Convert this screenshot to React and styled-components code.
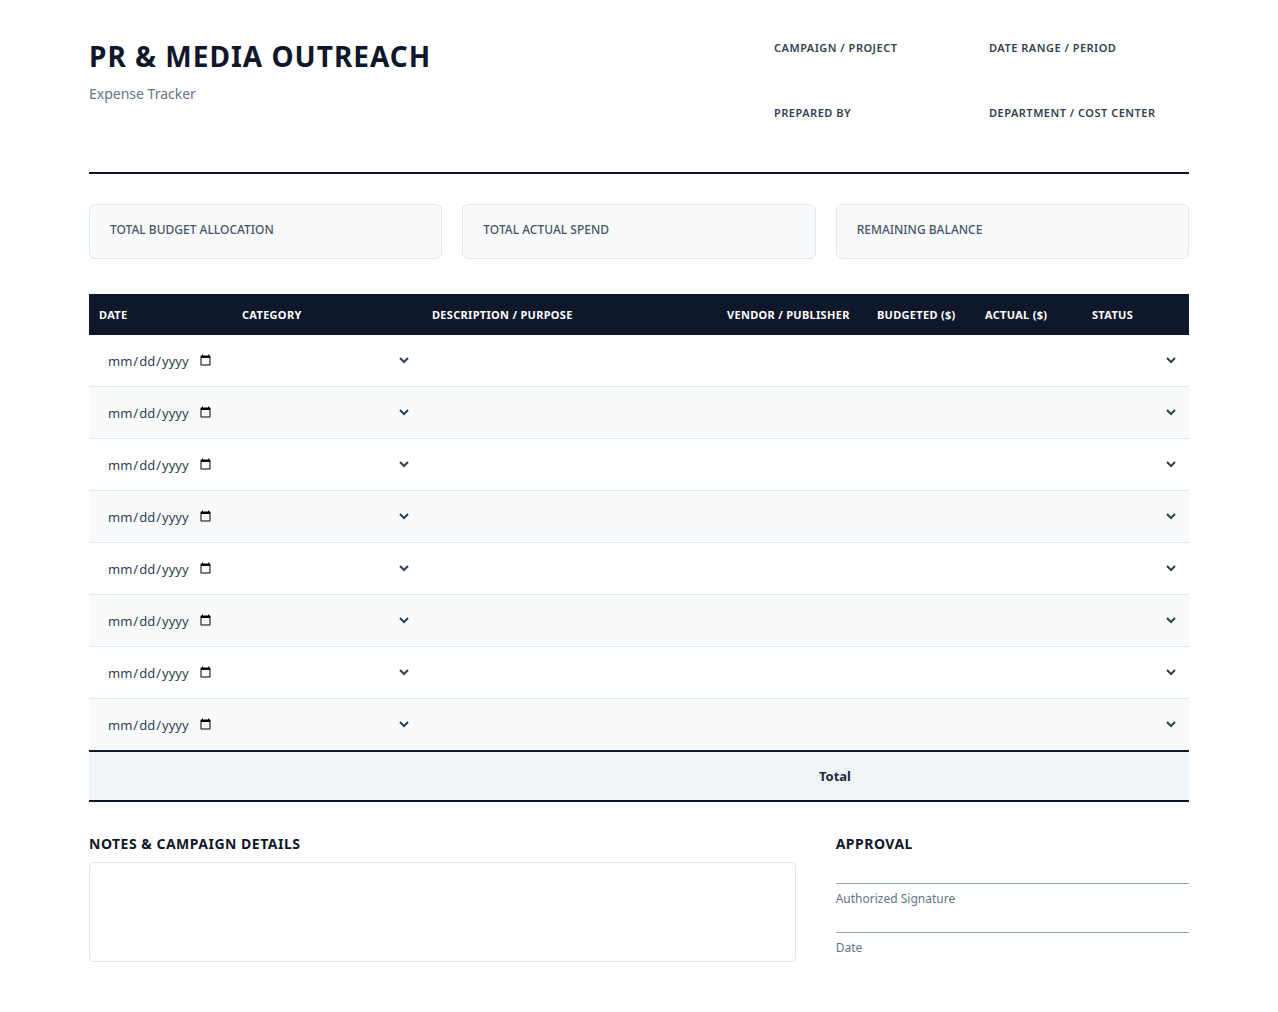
import React from "react";
import styled, { createGlobalStyle } from "styled-components";

const GlobalStyle = createGlobalStyle`
  body {
    margin: 0;
    background: #ffffff;
    font-family: "Noto Sans", "Open Sans", sans-serif;
    color: #0f172a;
  }
  * { box-sizing: border-box; }
`;

const Page = styled.div`
  width: 1100px;
  margin: 0 auto;
  padding: 40px 0;
`;

const Header = styled.header`
  display: flex;
  justify-content: space-between;
  align-items: flex-start;
  padding-bottom: 12px;
  border-bottom: 2px solid #0f172a;
`;

const Title = styled.h1`
  margin: 0;
  font-size: 28px;
  line-height: 1.2;
  font-weight: 700;
  letter-spacing: 1px;
  color: #0f172a;
`;

const Subtitle = styled.div`
  margin-top: 10px;
  font-size: 14px;
  line-height: 20px;
  color: #64748b;
`;

const MetaGrid = styled.div`
  display: grid;
  grid-template-columns: 200px 200px;
  column-gap: 15px;
  row-gap: 10px;
`;

const MetaField = styled.label`
  display: flex;
  flex-direction: column;
`;

const MetaLabel = styled.span`
  font-size: 11px;
  line-height: 16px;
  font-weight: 600;
  letter-spacing: 0.5px;
  color: #334155;
  text-transform: uppercase;
`;

const MetaInput = styled.input`
  height: 36px;
  margin-top: 3px;
  border: none;
  border-bottom: 1px solid transparent;
  background: transparent;
  font-family: inherit;
  font-size: 13px;
  outline: none;
`;

const Cards = styled.div`
  display: grid;
  grid-template-columns: repeat(3, 1fr);
  gap: 20px;
  margin-top: 30px;
`;

const Card = styled.div`
  border: 1px solid #e2e8f0;
  border-radius: 6px;
  background: #f8fafc;
  padding: 15px 20px 19px;
`;

const CardLabel = styled.div`
  font-size: 12px;
  line-height: 19px;
  font-weight: 500;
  color: #475569;
  text-transform: uppercase;
`;

const Table = styled.table`
  width: 100%;
  margin-top: 35px;
  border-collapse: collapse;
  table-layout: fixed;
`;

const Th = styled.th`
  background: #0f172a;
  color: #ffffff;
  text-align: left;
  font-size: 11px;
  line-height: 17px;
  font-weight: 700;
  letter-spacing: 0.3px;
  padding: 12px 10px;
  text-transform: uppercase;
  white-space: nowrap;
`;

const Row = styled.tr`
  background: ${(p) => (p.$alt ? "#f8fafc" : "#ffffff")};
  border-bottom: 1px solid #e2e8f0;
`;

const Td = styled.td`
  padding: 8px 10px;
  height: 51px;
`;

const CellInput = styled.input`
  width: 100%;
  height: 35px;
  padding: 6px 8px;
  border: none;
  background: transparent;
  font-family: inherit;
  font-size: 13px;
  color: #334155;
  outline: none;
`;

const CellSelect = styled.select`
  width: 100%;
  height: 35px;
  padding: 6px 4px;
  border: none;
  background: transparent;
  font-family: inherit;
  font-size: 13px;
  color: #334155;
  outline: none;
`;

const TotalRow = styled.tr`
  background: #f1f5f9;
  border-top: 2px solid #0f172a;
  border-bottom: 2px solid #0f172a;
`;

const TotalCell = styled.td`
  padding: 15px 16px;
  line-height: 18px;
  font-size: 13px;
  font-weight: 700;
  color: #1e293b;
  text-align: ${(p) => p.$align || "left"};
`;

const Bottom = styled.div`
  display: grid;
  grid-template-columns: 2fr 1fr;
  gap: 40px;
  margin-top: 32px;
`;

const SectionTitle = styled.h3`
  margin: 0 0 9px;
  font-size: 14px;
  line-height: 19px;
  font-weight: 700;
  letter-spacing: 0.5px;
  color: #0f172a;
`;

const Notes = styled.textarea`
  display: block;
  width: 100%;
  height: 100px;
  border: 1px solid #e2e8f0;
  border-radius: 4px;
  resize: none;
  font-family: inherit;
  font-size: 13px;
  padding: 10px;
  outline: none;
`;

const SigBlock = styled.div`
  margin-top: ${(p) => (p.$first ? "3px" : "4px")};
`;

const SigLine = styled.div`
  height: 22px;
  border-bottom: 1px solid #94a3b8;
`;

const SigLabel = styled.div`
  margin-top: 7px;
  font-size: 12px;
  line-height: 16px;
  color: #64748b;
`;

const columns = [
  { label: "Date", width: 143 },
  { label: "Category", width: 190 },
  { label: "Description / Purpose", width: 295 },
  { label: "Vendor / Publisher", width: 150 },
  { label: "Budgeted ($)", width: 108 },
  { label: "Actual ($)", width: 107 },
  { label: "Status", width: 107 },
];

const rows = Array.from({ length: 8 }, (_, i) => i);

export default function App() {
  return (
    <>
      <GlobalStyle />
      <Page>
        <Header>
          <div>
            <Title>PR &amp; MEDIA OUTREACH</Title>
            <Subtitle>Expense Tracker</Subtitle>
          </div>
          <MetaGrid>
            <MetaField>
              <MetaLabel>Campaign / Project</MetaLabel>
              <MetaInput />
            </MetaField>
            <MetaField>
              <MetaLabel>Date Range / Period</MetaLabel>
              <MetaInput />
            </MetaField>
            <MetaField>
              <MetaLabel>Prepared By</MetaLabel>
              <MetaInput />
            </MetaField>
            <MetaField>
              <MetaLabel>Department / Cost Center</MetaLabel>
              <MetaInput />
            </MetaField>
          </MetaGrid>
        </Header>

        <Cards>
          <Card><CardLabel>Total Budget Allocation</CardLabel></Card>
          <Card><CardLabel>Total Actual Spend</CardLabel></Card>
          <Card><CardLabel>Remaining Balance</CardLabel></Card>
        </Cards>

        <Table>
          <colgroup>
            {columns.map((c) => (
              <col key={c.label} style={{ width: c.width }} />
            ))}
          </colgroup>
          <thead>
            <tr>
              {columns.map((c) => (
                <Th key={c.label}>{c.label}</Th>
              ))}
            </tr>
          </thead>
          <tbody>
            {rows.map((i) => (
              <Row key={i} $alt={i % 2 === 1}>
                <Td><CellInput type="date" /></Td>
                <Td>
                  <CellSelect defaultValue="">
                    <option value=""></option>
                    <option>Press Release</option>
                    <option>Media Buy</option>
                    <option>Events</option>
                  </CellSelect>
                </Td>
                <Td><CellInput /></Td>
                <Td><CellInput /></Td>
                <Td><CellInput /></Td>
                <Td><CellInput /></Td>
                <Td>
                  <CellSelect defaultValue="">
                    <option value=""></option>
                    <option>Pending</option>
                    <option>Paid</option>
                  </CellSelect>
                </Td>
              </Row>
            ))}
            <TotalRow>
              <TotalCell colSpan={4} $align="right">Total</TotalCell>
              <TotalCell />
              <TotalCell />
              <TotalCell />
            </TotalRow>
          </tbody>
        </Table>

        <Bottom>
          <div>
            <SectionTitle>NOTES &amp; CAMPAIGN DETAILS</SectionTitle>
            <Notes />
          </div>
          <div>
            <SectionTitle>APPROVAL</SectionTitle>
            <SigBlock $first>
              <SigLine />
              <SigLabel>Authorized Signature</SigLabel>
            </SigBlock>
            <SigBlock>
              <SigLine />
              <SigLabel>Date</SigLabel>
            </SigBlock>
          </div>
        </Bottom>
      </Page>
    </>
  );
}
